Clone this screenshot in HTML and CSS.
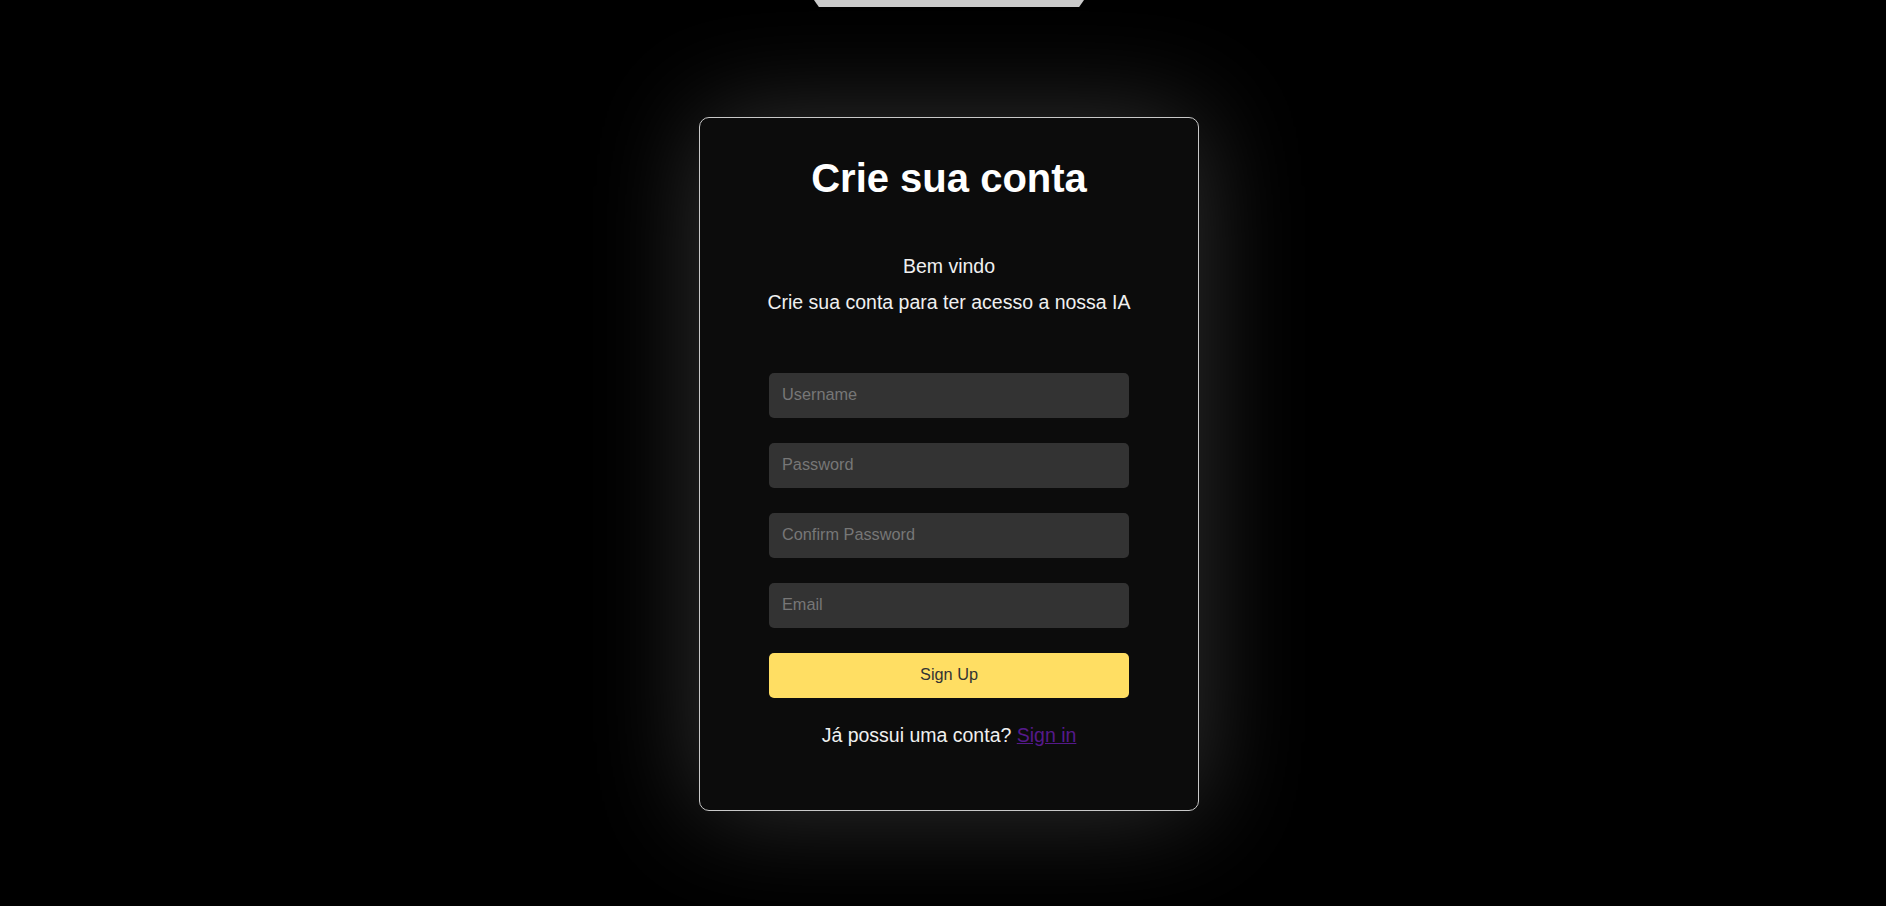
FILE: index.html
```html
<!DOCTYPE html>
<html lang="pt-BR">
<head>
<meta charset="utf-8">
<title>Crie sua conta</title>
<link rel="stylesheet" href="styles.css">
</head>
<body>
<div class="page">
  <div class="top-tab"></div>
  <div class="card">
    <h1 class="title">Crie sua conta</h1>
    <p class="welcome">Bem vindo</p>
    <p class="subtitle">Crie sua conta para ter acesso a nossa IA</p>
    <form class="form">
      <input class="field" type="text" placeholder="Username">
      <input class="field" type="password" placeholder="Password">
      <input class="field" type="password" placeholder="Confirm Password">
      <input class="field" type="email" placeholder="Email">
      <button class="submit" type="button">Sign Up</button>
    </form>
    <p class="footer-text">Já possui uma conta? <a class="link" href="#signin">Sign in</a></p>
  </div>
</div>
</body>
</html>
```
FILE: styles.css
```css
html, body {
  margin: 0;
  padding: 0;
  background: #000;
  height: 100%;
  overflow: hidden;
}

body {
  font-family: "Liberation Sans", Arial, sans-serif;
  color: #f2f2f2;
}

.page {
  position: relative;
  display: flex;
  justify-content: center;
  align-items: flex-start;
  padding: 117px 0 0 12px;
  box-sizing: border-box;
  min-height: 100%;
}

.top-tab {
  position: absolute;
  top: 0;
  left: calc(50% + 6px);
  transform: translateX(-50%);
  width: 270px;
  height: 7px;
  background: #cbcbcb;
  clip-path: polygon(0 0, 100% 0, 98.2% 100%, 1.8% 100%);
  border-radius: 0 0 3px 3px;
}

.card {
  width: 500px;
  box-sizing: border-box;
  background: #0c0c0c;
  border: 1px solid #c9c9c9;
  border-radius: 10px;
  box-shadow: 0 0 110px rgba(255, 255, 255, 0.2);
  padding: 37px 0 63px;
  display: flex;
  flex-direction: column;
  align-items: center;
}

.title {
  margin: 0;
  font-size: 40px;
  line-height: 46px;
  font-weight: 700;
  color: #fff;
}

.welcome,
.subtitle,
.footer-text {
  margin: 0;
  font-size: 19.5px;
  line-height: 24px;
  color: #f0f0f0;
}

.welcome {
  margin-top: 53px;
}

.subtitle {
  margin-top: 12px;
}

.form {
  margin-top: 59px;
  width: 360px;
  display: flex;
  flex-direction: column;
  gap: 25px;
}

.field {
  height: 45px;
  box-sizing: border-box;
  border: none;
  border-radius: 5px;
  background: #333;
  padding: 0 0 2px 13px;
  font-family: "Liberation Sans", Arial, sans-serif;
  font-size: 16.3px;
  color: #eee;
  outline: none;
}

.field::placeholder {
  color: #777;
}

.submit {
  height: 45px;
  border: none;
  border-radius: 5px;
  background: #ffde63;
  color: #333;
  font-family: "Liberation Sans", Arial, sans-serif;
  font-size: 16.3px;
  padding: 0 0 2px;
  cursor: pointer;
}

.footer-text {
  margin-top: 25px;
}

.link {
  color: #551a8b;
  text-decoration: underline;
}
```
